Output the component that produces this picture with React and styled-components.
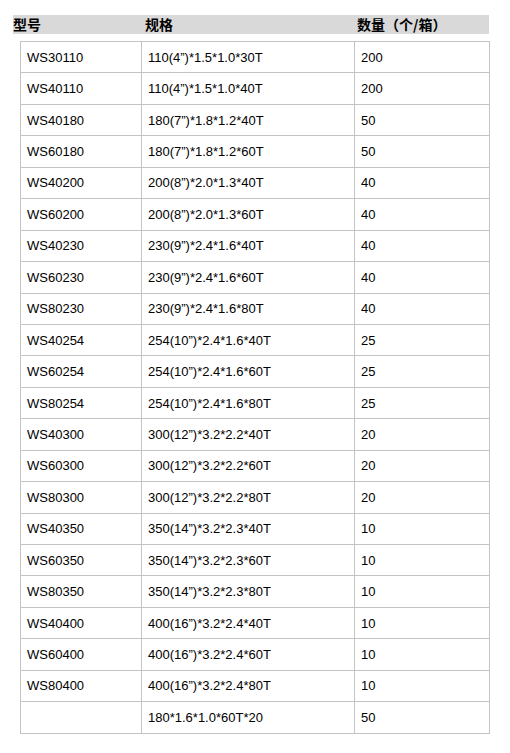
import React from 'react'
import styled, { createGlobalStyle } from 'styled-components'

const GlobalStyle = createGlobalStyle`
  body {
    margin: 0;
    background: #ffffff;
    font-family: "Liberation Sans", "Noto Sans CJK SC", sans-serif;
    color: #000000;
  }
`

const Page = styled.div`
  padding: 15px 21px 20px 13px;
  width: 510px;
  box-sizing: border-box;
`

const HeaderBar = styled.div`
  display: grid;
  grid-template-columns: 132px 212px 1fr;
  height: 19px;
  align-items: center;
  background: #d9d9d9;
  font-family: "Noto Sans CJK SC", sans-serif;
  font-weight: 700;
  font-size: 14px;
  color: #000000;
  line-height: 19px;
`

const HeaderCell = styled.div`
  white-space: nowrap;
`

const Table = styled.table`
  margin: 7px 0 0 7px;
  width: 469px;
  border-collapse: collapse;
  table-layout: fixed;
  font-size: 13px;
`

const Row = styled.tr`
  height: 31.45px;
`

const Cell = styled.td`
  border: 1px solid #c4c4c4;
  padding: 0 0 0 6px;
  vertical-align: middle;
  white-space: nowrap;
  color: #000000;
`

const rows = [
  ['WS30110', '110(4”)*1.5*1.0*30T', '200'],
  ['WS40110', '110(4”)*1.5*1.0*40T', '200'],
  ['WS40180', '180(7”)*1.8*1.2*40T', '50'],
  ['WS60180', '180(7”)*1.8*1.2*60T', '50'],
  ['WS40200', '200(8”)*2.0*1.3*40T', '40'],
  ['WS60200', '200(8”)*2.0*1.3*60T', '40'],
  ['WS40230', '230(9”)*2.4*1.6*40T', '40'],
  ['WS60230', '230(9”)*2.4*1.6*60T', '40'],
  ['WS80230', '230(9”)*2.4*1.6*80T', '40'],
  ['WS40254', '254(10”)*2.4*1.6*40T', '25'],
  ['WS60254', '254(10”)*2.4*1.6*60T', '25'],
  ['WS80254', '254(10”)*2.4*1.6*80T', '25'],
  ['WS40300', '300(12”)*3.2*2.2*40T', '20'],
  ['WS60300', '300(12”)*3.2*2.2*60T', '20'],
  ['WS80300', '300(12”)*3.2*2.2*80T', '20'],
  ['WS40350', '350(14”)*3.2*2.3*40T', '10'],
  ['WS60350', '350(14”)*3.2*2.3*60T', '10'],
  ['WS80350', '350(14”)*3.2*2.3*80T', '10'],
  ['WS40400', '400(16”)*3.2*2.4*40T', '10'],
  ['WS60400', '400(16”)*3.2*2.4*60T', '10'],
  ['WS80400', '400(16”)*3.2*2.4*80T', '10'],
  ['', '180*1.6*1.0*60T*20', '50']
]

export default function App() {
  return (
    <Page>
      <GlobalStyle />
      <HeaderBar>
        <HeaderCell>型号</HeaderCell>
        <HeaderCell>规格</HeaderCell>
        <HeaderCell>数量（个/箱）</HeaderCell>
      </HeaderBar>
      <Table>
        <colgroup>
          <col style={{ width: 121 }} />
          <col style={{ width: 213 }} />
          <col style={{ width: 135 }} />
        </colgroup>
        <tbody>
          {rows.map((r, i) => (
            <Row key={i}>
              <Cell>{r[0]}</Cell>
              <Cell>{r[1]}</Cell>
              <Cell>{r[2]}</Cell>
            </Row>
          ))}
        </tbody>
      </Table>
    </Page>
  )
}
